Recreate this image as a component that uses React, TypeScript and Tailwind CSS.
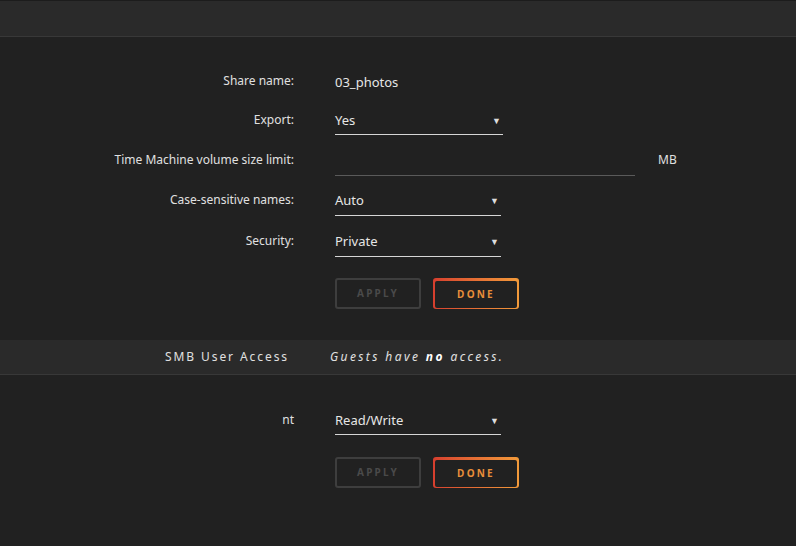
import React from "react";

const font = { fontFamily: '"Noto Sans", "Open Sans", sans-serif' };

function Caret() {
  return <span className="text-[9px] text-[#ddd] leading-none">▼</span>;
}

function Select({ value, width = "w-[166px]", tall = false }: { value: string; width?: string; tall?: boolean }) {
  return (
    <div className={`${width} ${tall ? "h-[28px]" : "h-[27px]"} flex items-start justify-between border-b border-[#d6d6d6] pr-[2px] text-[13px] text-[#e6e6e6]`}>
      <span className="leading-[24px]">{value}</span>
      <span className="h-[24px] flex items-center">
        <Caret />
      </span>
    </div>
  );
}

function Buttons() {
  return (
    <div className="flex gap-[12px]">
      <button className="w-[86px] h-[31px] rounded-[3px] border-2 border-[#3e3e3e] text-[10px] font-bold tracking-[0.22em] text-[#4a4a4a]">
        APPLY
      </button>
      <div className="w-[86px] h-[31px] rounded-[3px] p-[2px] bg-gradient-to-r from-[#d63e2e] to-[#f29a3a]">
        <button className="w-full h-full rounded-[2px] bg-[#212121] text-[10px] font-bold tracking-[0.22em] text-[#e88e3a]">
          DONE
        </button>
      </div>
    </div>
  );
}

function Row({ label, children, className = "" }: { label: string; children: React.ReactNode; className?: string }) {
  return (
    <div className={`flex items-start h-[24px] ${className}`}>
      <div className="w-[295px] pr-[1px] text-right text-[12px] leading-[24px] text-[#e0e0e0]">{label}</div>
      <div className="ml-[40px]">{children}</div>
    </div>
  );
}

export default function App() {
  return (
    <div className="w-[796px] h-[546px] bg-[#212121] overflow-hidden" style={font}>
      <div className="h-[37px] bg-[#2a2a2a] border-t border-[#1c1c1c] border-b border-b-[#383838]" />
      <div className="pt-[32px]">
        <Row label="Share name:">
          <span className="text-[13px] leading-[24px] text-[#e6e6e6]">03_photos</span>
        </Row>
        <Row label="Export:" className="mt-[15px]">
          <Select value="Yes" width="w-[168px]" />
        </Row>
        <Row label="Time Machine volume size limit:" className="mt-[16px]">
          <div className="flex items-start">
            <div className="w-[300px] h-[28px] border-b border-[#5a5a5a]" />
            <span className="ml-[23px] text-[12px] leading-[24px] text-[#e0e0e0]">MB</span>
          </div>
        </Row>
        <Row label="Case-sensitive names:" className="mt-[16px]">
          <Select value="Auto" tall />
        </Row>
        <Row label="Security:" className="mt-[17px]">
          <Select value="Private" tall />
        </Row>
        <div className="ml-[335px] mt-[25px]">
          <Buttons />
        </div>
      </div>
      <div className="mt-[31px] h-[35px] bg-[#2a2a2a] border-b border-[#383838] flex items-center">
        <div className="w-[289px] text-right text-[12px] tracking-[0.16em] text-[#e0e0e0]">SMB User Access</div>
        <div className="ml-[41px] text-[12px] italic tracking-[0.2em] text-[#e0e0e0]">
          Guests have <span className="font-bold text-white">no</span> access.
        </div>
      </div>
      <div className="pt-[33px]">
        <Row label="nt">
          <Select value="Read/Write" />
        </Row>
        <div className="ml-[335px] mt-[25px]">
          <Buttons />
        </div>
      </div>
    </div>
  );
}
